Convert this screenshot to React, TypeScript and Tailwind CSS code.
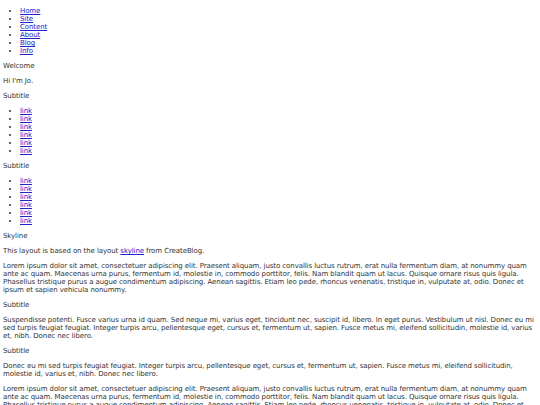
const nav = ["Home", "Site", "Content", "About", "Blog", "Info"];
const links = ["link", "link", "link", "link", "link", "link"];

const lorem =
  "Lorem ipsum dolor sit amet, consectetuer adipiscing elit. Praesent aliquam, justo convallis luctus rutrum, erat nulla fermentum diam, at nonummy quam ante ac quam. Maecenas urna purus, fermentum id, molestie in, commodo porttitor, felis. Nam blandit quam ut lacus. Quisque ornare risus quis ligula. Phasellus tristique purus a augue condimentum adipiscing. Aenean sagittis. Etiam leo pede, rhoncus venenatis, tristique in, vulputate at, odio. Donec et ipsum et sapien vehicula nonummy.";

function LinkList({ items }: { items: string[] }) {
  return (
    <ul className="my-[7px] list-disc pl-[17px]">
      {items.map((t, i) => (
        <li key={i}>
          <a href="#" className="text-[#2222cc] underline">
            {t}
          </a>
        </li>
      ))}
    </ul>
  );
}

export default function App() {
  return (
    <div className="pl-[3px] pr-[2px] pt-0 pb-px text-[7px] leading-[8px] tracking-[-0.09px] text-[#333] bg-white min-h-screen [font-family:'DejaVu_Sans',Verdana,sans-serif]">
      <LinkList items={nav} />
      <p className="my-[7px]">Welcome</p>
      <p className="my-[7px]">Hi I'm Jo.</p>
      <p className="my-[7px]">Subtitle</p>
      <LinkList items={links} />
      <p className="my-[7px]">Subtitle</p>
      <LinkList items={links} />
      <p className="my-[7px]">Skyline</p>
      <p className="my-[7px]">
        This layout is based on the layout{" "}
        <a href="#" className="text-[#2222cc] underline">
          skyline
        </a>{" "}
        from CreateBlog.
      </p>
      <p className="my-[7px]">{lorem}</p>
      <p className="my-[7px]">Subtitle</p>
      <p className="my-[7px]">
        Suspendisse potenti. Fusce varius urna id quam. Sed neque mi, varius eget, tincidunt nec, suscipit id, libero. In eget purus. Vestibulum ut nisl. Donec eu mi sed turpis feugiat feugiat. Integer turpis arcu, pellentesque eget, cursus et, fermentum ut, sapien. Fusce metus mi, eleifend sollicitudin, molestie id, varius et, nibh. Donec nec libero.
      </p>
      <p className="my-[7px]">Subtitle</p>
      <p className="my-[7px]">
        Donec eu mi sed turpis feugiat feugiat. Integer turpis arcu, pellentesque eget, cursus et, fermentum ut, sapien. Fusce metus mi, eleifend sollicitudin, molestie id, varius et, nibh. Donec nec libero.
      </p>
      <p className="my-[7px]">{lorem}</p>
    </div>
  );
}
